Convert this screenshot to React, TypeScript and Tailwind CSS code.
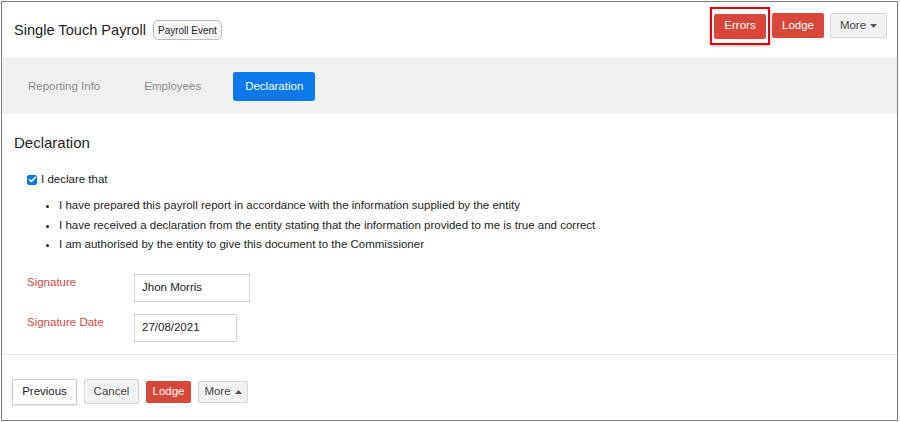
import { Check } from 'lucide-react'

const bullets = [
  'I have prepared this payroll report in accordance with the information supplied by the entity',
  'I have received a declaration from the entity stating that the information provided to me is true and correct',
  'I am authorised by the entity to give this document to the Commissioner'
]

function Caret({ up = false }: { up?: boolean }) {
  return (
    <svg width="7" height="4" viewBox="0 0 7 4" className="ml-1 inline-block">
      {up ? <path d="M0 4 L3.5 0 L7 4 Z" fill="#555" /> : <path d="M0 0 L3.5 4 L7 0 Z" fill="#555" />}
    </svg>
  )
}

export default function App() {
  return (
    <div className="w-[900px] h-[422px] bg-white p-px font-['Liberation_Sans',Arial,sans-serif] text-[#222]">
      <div className="h-[420px] w-[897px] border border-[#7c7c7c] flex flex-col">
        {/* header */}
        <div className="h-[55px] flex items-center justify-between pl-[12px] pr-[10px]">
          <div className="flex items-center gap-[7px] pt-[2px]">
            <h1 className="text-[14.6px]">Single Touch Payroll</h1>
            <span className="text-[10px] border border-[#bbb] bg-[#f7f7f7] rounded-[5px] px-[4px] h-[20px] flex items-center">
              Payroll Event
            </span>
          </div>
          <div className="flex items-center gap-[2px] -mt-[8px]">
            <div className="border-2 border-[#e8000b] pt-[5px] pb-[4px] px-[2px] shadow-[0_1px_3px_rgba(0,0,0,0.25)]">
              <button className="h-[25px] w-[52px] bg-[#d9473b] text-white text-[11.5px] rounded-[2px] block">Errors</button>
            </div>
            <div className="flex items-center gap-[6px]">
              <button className="h-[25px] w-[52px] bg-[#d9473b] text-white text-[11.5px] rounded-[2px]">Lodge</button>
              <button className="h-[25px] w-[57px] bg-[#f2f2f2] border border-[#d6d6d6] text-[#444] text-[11.5px] rounded-[2px] flex items-center justify-center">
                More
                <Caret />
              </button>
            </div>
          </div>
        </div>

        {/* tabs */}
        <div className="h-[57px] bg-[#f0f0f0] flex items-center pl-[26px] gap-[44px] text-[11.5px] pt-[2px]">
          <span className="text-[#8a8a8a]">Reporting Info</span>
          <span className="text-[#8a8a8a]">Employees</span>
          <span className="h-[29px] px-[12px] bg-[#0a79ea] text-white rounded-[3px] flex items-center -ml-[12px]">Declaration</span>
        </div>

        {/* body */}
        <div className="flex-1 pl-[12px] pt-[20px]">
          <h2 className="text-[15px] leading-[18px]">Declaration</h2>
          <div className="mt-[19px] ml-[13px] flex items-center gap-[4px] text-[11.5px]">
            <span className="w-[10px] h-[10px] rounded-[2px] bg-[#0a79ea] flex items-center justify-center">
              <Check className="w-[9px] h-[9px] text-white" strokeWidth={4} />
            </span>
            <span>I declare that</span>
          </div>
          <ul className="mt-[8px] ml-[45px] list-disc text-[11.5px] leading-[19.5px]">
            {bullets.map(b => (
              <li key={b}>{b}</li>
            ))}
          </ul>
          <div className="mt-[19px] ml-[13px] text-[11.5px] flex flex-col gap-[12px]">
            <div className="flex items-start">
              <span className="w-[107px] text-[#d9473b]">Signature</span>
              <span className="w-[116px] h-[28px] border border-[#d4d4d4] flex items-center px-[7px]">Jhon Morris</span>
            </div>
            <div className="flex items-start">
              <span className="w-[107px] text-[#d9473b]">Signature Date</span>
              <span className="w-[103px] h-[28px] border border-[#d4d4d4] flex items-center px-[7px]">27/08/2021</span>
            </div>
          </div>
        </div>

        {/* footer */}
        <div className="h-[66px] border-t border-[#e8e8e8] flex items-center pl-[10px] gap-[7px] text-[11.5px] pt-[8px]">
          <button className="h-[26px] w-[65px] bg-white border border-[#ccc] rounded-[2px] shadow-[0_1px_2px_rgba(0,0,0,0.15)]">Previous</button>
          <button className="h-[25px] w-[55px] bg-[#f2f2f2] border border-[#d6d6d6] text-[#444] rounded-[2px]">Cancel</button>
          <button className="h-[22px] w-[45px] bg-[#d9473b] text-white rounded-[2px]">Lodge</button>
          <button className="h-[22px] w-[50px] bg-[#f2f2f2] border border-[#d6d6d6] text-[#444] rounded-[2px] flex items-center justify-center">
            More
            <Caret up />
          </button>
        </div>
      </div>
    </div>
  )
}
